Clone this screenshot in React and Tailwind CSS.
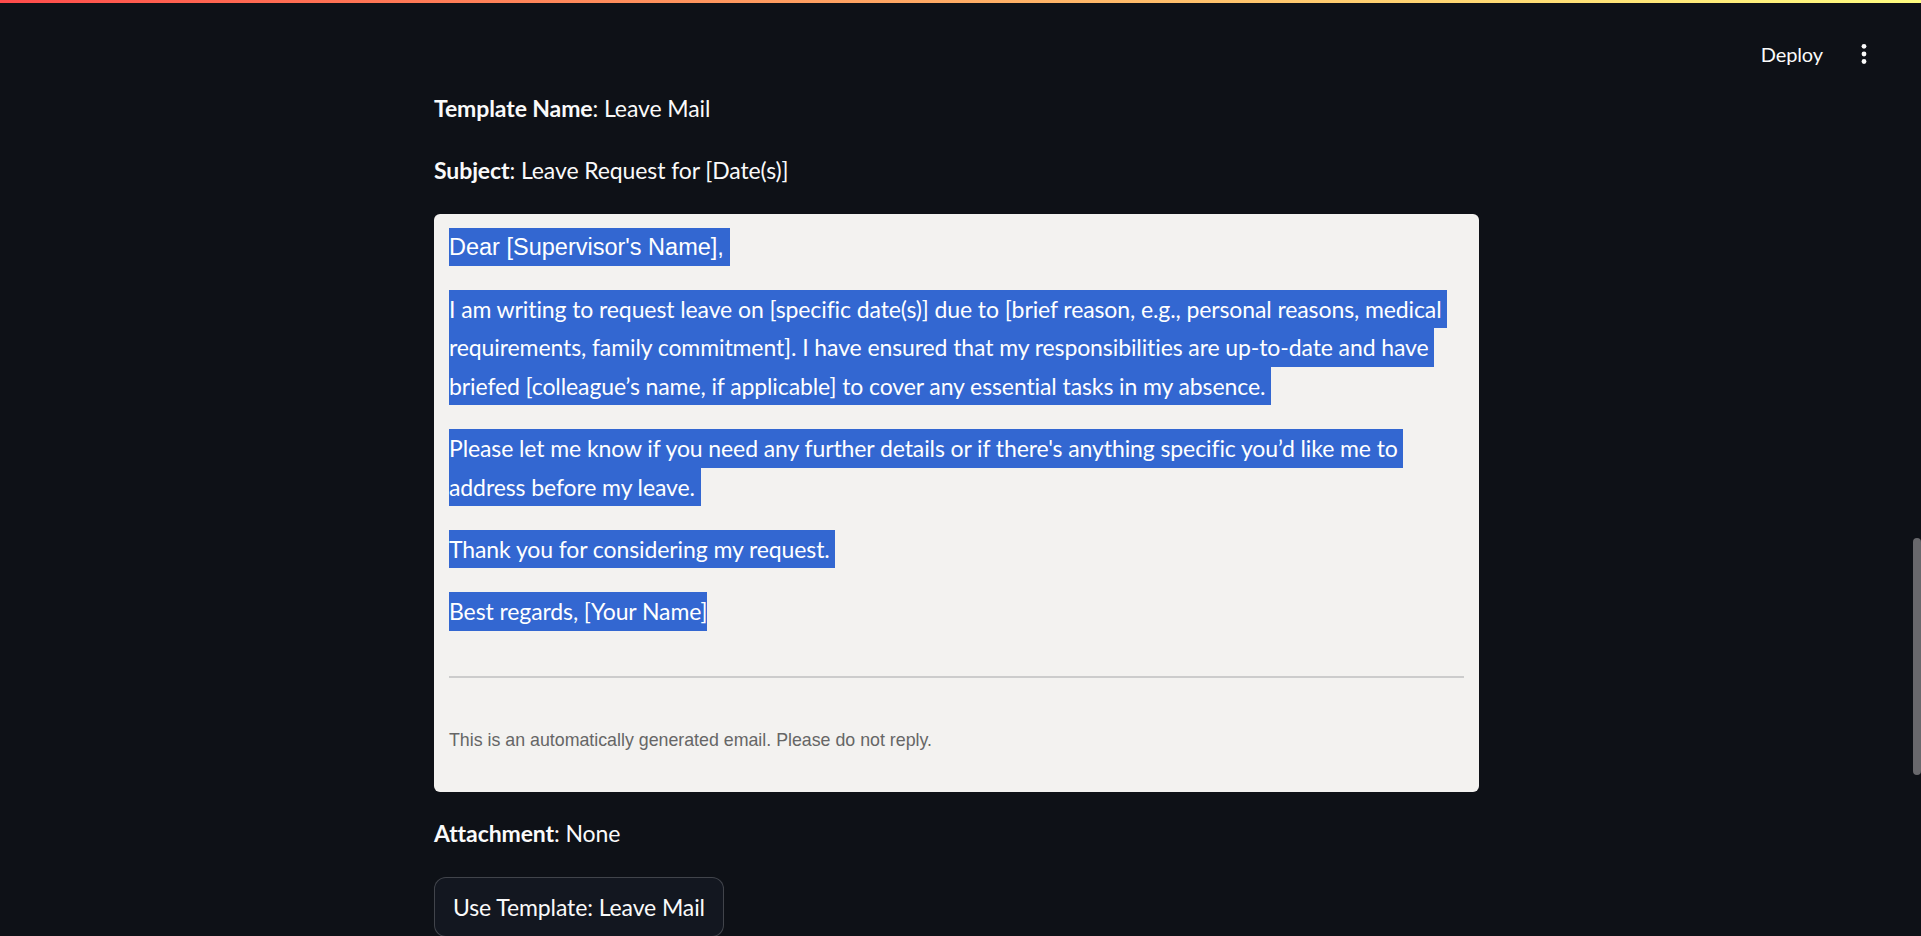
import React from "react";

const HL = "bg-[#3367d1] text-white py-[5.2px]";

function Header() {
    return (
        <div className="flex h-[86px] items-start justify-end pt-[35px] pr-[47px]">
            <button className="text-[20px] leading-[32px] text-[#fafafa]">Deploy</button>
            {/* three dots menu */}
            <div className="ml-[31px] flex h-[32px] w-[20px] items-center justify-center">
                <svg width="6" height="22" viewBox="0 0 6 22">
                    <circle cx="3" cy="3.3" r="2.4" fill="#fafafa" />
                    <circle cx="3" cy="11" r="2.4" fill="#fafafa" />
                    <circle cx="3" cy="18.5" r="2.4" fill="#fafafa" />
                </svg>
            </div>
        </div>
    );
}

function MailPreview() {
    return (
        <div className="rounded-[6px] bg-[#f3f2f0] px-[15px] pt-[14px] pb-[37px]">
            {/* salutation in the mail's own font */}
            <p className="mb-[24px] font-['Liberation_Sans',Arial,sans-serif] text-[23.5px] leading-[38.4px] tracking-normal">
                <span className="bg-[#3367d1] text-white py-[5.8px]">Dear [Supervisor's Name],{"\u00a0"}</span>
            </p>
            <p className="mb-[24px] whitespace-nowrap">
                <span className={HL}>
                    I am writing to request leave on [specific date(s)] due to [brief reason, e.g., personal reasons, medical{"\u00a0"}
                    <br />
                    requirements, family commitment]. I have ensured that my responsibilities are up-to-date and have{"\u00a0"}
                    <br />
                    briefed [colleague’s name, if applicable] to cover any essential tasks in my absence.{"\u00a0"}
                </span>
            </p>
            <p className="mb-[24px] whitespace-nowrap">
                <span className={HL}>
                    Please let me know if you need any further details or if there's anything specific you’d like me to{"\u00a0"}
                    <br />
                    address before my leave.{"\u00a0"}
                </span>
            </p>
            <p className="mb-[24px]">
                <span className={HL}>Thank you for considering my request.{"\u00a0"}</span>
            </p>
            <p>
                <span className={HL}>Best regards, [Your Name]</span>
            </p>

            <hr className="mt-[45px] border-0 h-[2px] bg-[#cccccc]" />

            <p className="mt-[48px] font-['Liberation_Sans',Arial,sans-serif] text-[17.8px] leading-[28.8px] tracking-normal text-[#666666]">
                This is an automatically generated email. Please do not reply.
            </p>
        </div>
    );
}

export default function App() {
    return (
        <div className="relative h-[936px] w-full overflow-hidden bg-[#0e1117] font-['Lato','Noto_Sans',sans-serif] text-[23px] leading-[38.4px] tracking-[-0.1px] text-[#fafafa]">
            <div className="h-[3px] w-full bg-gradient-to-r from-[#ff4b4b] to-[#fffd80]" />
            <Header />

            <div className="flex">
                <div className="flex flex-1 justify-center">
                    <div className="w-[1045px]">
                        <p className="mb-[24px]">
                            <b className="font-bold">Template Name</b>: Leave Mail
                        </p>
                        <p className="mb-[24px]">
                            <b className="font-bold">Subject</b>: Leave Request for [Date(s)]
                        </p>

                        <MailPreview />

                        <p className="mt-[22px] mb-[25px]">
                            <b className="font-bold">Attachment</b>: None
                        </p>

                        <button className="h-[60px] rounded-[12px] border-[1.5px] border-[rgba(250,250,250,0.2)] bg-[#131720] px-[18px] text-[23px] leading-[38.4px] text-[#fafafa]">
                            Use Template: Leave Mail
                        </button>
                    </div>
                </div>
                <div className="w-[8px]" />
            </div>

            {/* scrollbar thumb */}
            <div className="absolute right-0 top-[538px] h-[237px] w-[8px] rounded-full bg-[#68686c]" />
        </div>
    );
}
